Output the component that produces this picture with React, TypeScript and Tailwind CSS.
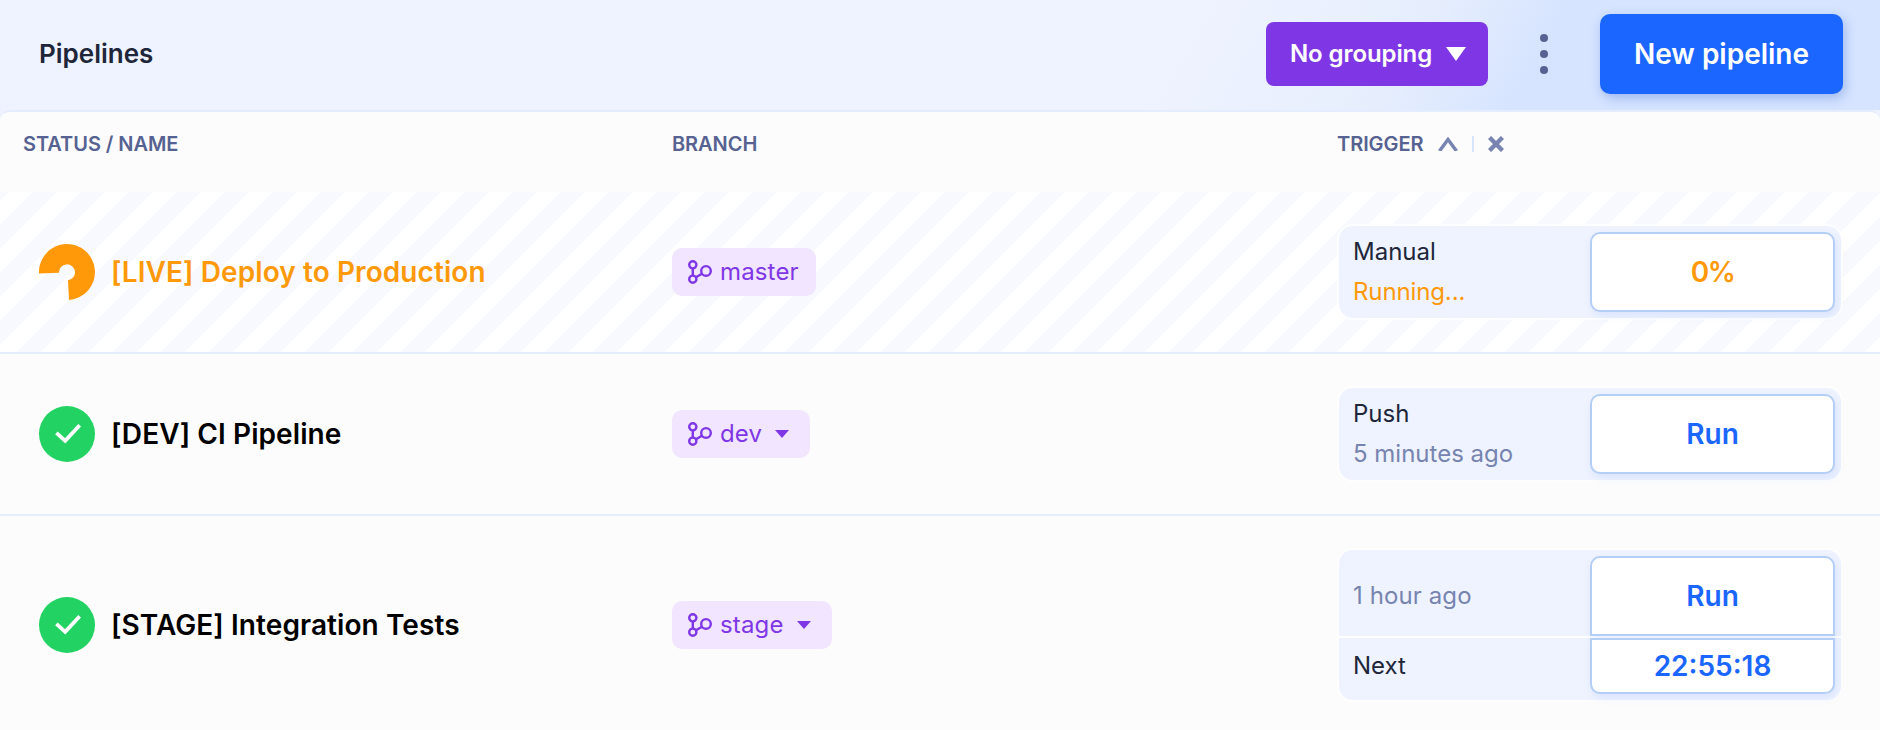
import type { ReactNode } from "react";

function BranchIcon() {
  return (
    <svg width="24" height="24" viewBox="0 0 24 24" fill="none" stroke="currentColor" strokeWidth="2.4">
      <circle cx="4.8" cy="4.8" r="3.6" />
      <circle cx="4.8" cy="19.2" r="3.6" />
      <circle cx="18" cy="10.9" r="4.8" />
      <path d="M4.8 8.4v7.2M8 17.3l5.9-3.5" />
    </svg>
  );
}

function Check() {
  return (
    <svg width="56" height="56" viewBox="0 0 56 56" className="shrink-0">
      <circle cx="28" cy="28" r="28" fill="#22d262" />
      <path d="M17.4 26.8l8.8 8L40.700 19.3" fill="none" stroke="#fff" strokeWidth="3.8" />
    </svg>
  );
}

function Running() {
  return (
    <svg width="56" height="56" viewBox="0 0 56 56" className="shrink-0">
      <path d="M0 29.5A28 28 0 1 1 30 56L29 36.3A8 8 0 1 0 20 28.8Z" fill="#ff990a" />
    </svg>
  );
}

function Branch({ name, menu }: { name: string; menu?: boolean }) {
  return (
    <div className="flex h-12 w-fit items-center rounded-[10px] bg-[#f1e5ff] pl-4 pr-[17px] text-2xl text-[#7f37e6]">
      <BranchIcon />
      <span className="ml-2 tracking-[0.15px]">{name}</span>
      {menu && (
        <svg width="14" height="8" viewBox="0 0 14 8" className="ml-[13px] mr-1" fill="currentColor">
          <path d="M0 0h14L7 8z" />
        </svg>
      )}
    </div>
  );
}

function Row({ icon, name, branch, live, children }: { icon: ReactNode; name: string; branch: ReactNode; live?: boolean; children: ReactNode }) {
  return (
    <div
      className={
        "grid shrink-0 grid-cols-[672px_667px_1fr] items-center border-b-2 border-[#e3edfd] py-[34px] " +
        (live
          ? "bg-[repeating-linear-gradient(135deg,#f7f9fe_0px,#f7f9fe_6.15px,#fff_6.15px,#fff_23.12px,#f7f9fe_23.12px,#f7f9fe_33.94px)] text-[#ff990a]"
          : "text-black")
      }
    >
      <div className="flex items-center gap-4 pl-[39px] text-[28px] font-semibold tracking-[0.08px]">
        {icon}
        <span>{name}</span>
      </div>
      {branch}
      {children}
    </div>
  );
}

const panel = "w-[502px] bg-[#eff3ff] ring-2 ring-white/80 text-2xl text-[#20263a]";
const action =
  "flex w-[245px] shrink-0 items-center justify-center border-2 border-[#b5cef5] bg-white pt-[2px] text-[28px] font-semibold text-[#1a66ff] shadow-[2px_4px_8px_rgba(26,102,255,0.1)]";

export default function App() {
  return (
    <div className="flex h-[730px] w-[1880px] flex-col overflow-hidden bg-[#eff3ff] font-['Inter',sans-serif]">
      <header className="flex h-[110px] shrink-0 items-center bg-[linear-gradient(120deg,#eff3ff_62%,#e6eefd_74%,#d6e4ff_81%,#d6e4ff_100%)] pb-[2px] pl-[39px] pr-[37px]">
        <h1 className="mr-auto pb-[2px] text-[26px] font-semibold text-[#20263a]">Pipelines</h1>
        <button className="flex h-16 w-[222px] items-center rounded-lg bg-[#7f37e6] pl-6 text-2xl font-semibold tracking-[-0.1px] text-white">
          No grouping
          <svg width="20" height="14" viewBox="0 0 20 14" className="ml-[14px]" fill="currentColor">
            <path d="M0 0h20L10 14z" />
          </svg>
        </button>
        <svg width="8" height="40" viewBox="0 0 8 40" className="mx-[52px]" fill="#566291">
          <circle cx="4" cy="4" r="4" />
          <circle cx="4" cy="20" r="4" />
          <circle cx="4" cy="36" r="4" />
        </svg>
        <button className="h-20 w-[243px] rounded-[10px] bg-[#1a66ff] text-[28px] font-semibold text-white shadow-[2px_4px_12px_rgba(26,80,200,0.3)]">
          New pipeline
        </button>
      </header>
      <main className="flex flex-1 flex-col rounded-t-[10px] border-t-2 border-[#e3edfd] bg-[#fcfcfc]">
        <div className="grid h-20 shrink-0 grid-cols-[649px_665px_1fr] items-start pl-[23px] pt-[17px] text-xl leading-[30px] font-semibold tracking-[-0.06px] text-[#566291]">
          <span>STATUS / NAME</span>
          <span>BRANCH</span>
          <span className="flex items-center">
            TRIGGER
            <svg width="20" height="14" viewBox="0 0 20 14" className="ml-[15px]" fill="none" stroke="#7784b0" strokeWidth="3.4">
              <path d="M1.5 14L10 2.5l8.5 11.5" />
            </svg>
            <span className="ml-[14px] h-4 w-[2px] bg-[#d6e4ff]" />
            <svg width="16" height="16" viewBox="0 0 16 16" className="ml-[14px]" fill="none" stroke="#7784b0" strokeWidth="4.4">
              <path d="M1.5 1.5l13 13M14.5 1.5l-13 13" />
            </svg>
          </span>
        </div>
        <Row live icon={<Running />} name="[LIVE] Deploy to Production" branch={<Branch name="master" />}>
          <div className={panel + " flex h-[92px] rounded-[14px]"}>
            <div className="flex w-[251px] flex-col pl-[14px] pt-[6px] leading-10">
              <span>Manual</span>
              <span className="tracking-[-0.12px] text-[#ff990a]">Running...</span>
            </div>
            <div className={action + " mt-[6px] h-20 rounded-[10px]"}>
              <span className="tracking-[-1.5px] text-[#ff990a]">0%</span>
            </div>
          </div>
        </Row>
        <Row icon={<Check />} name="[DEV] CI Pipeline" branch={<Branch name="dev" menu />}>
          <div className={panel + " flex h-[92px] rounded-[14px]"}>
            <div className="flex w-[251px] flex-col pl-[14px] pt-[6px] leading-10">
              <span>Push</span>
              <span className="text-[#7784b0]">5 minutes ago</span>
            </div>
            <div className={action + " mt-[6px] h-20 rounded-[10px]"}>Run</div>
          </div>
        </Row>
        <Row icon={<Check />} name="[STAGE] Integration Tests" branch={<Branch name="stage" menu />}>
          <div className={panel + " h-[150px] rounded-[14px]"}>
            <div className="flex h-[88px] items-center border-b-2 border-white">
              <span className="w-[251px] pl-[14px] pt-[6px] tracking-[0.1px] text-[#7784b0]">1 hour ago</span>
              <div className={action + " mt-[6px] h-20 rounded-t-[10px]"}>Run</div>
            </div>
            <div className="flex h-[62px]">
              <span className="w-[251px] pl-[14px] leading-[56px]">Next</span>
              <div className={action + " h-14 rounded-b-[10px]"}>22:55:18</div>
            </div>
          </div>
        </Row>
      </main>
    </div>
  );
}
